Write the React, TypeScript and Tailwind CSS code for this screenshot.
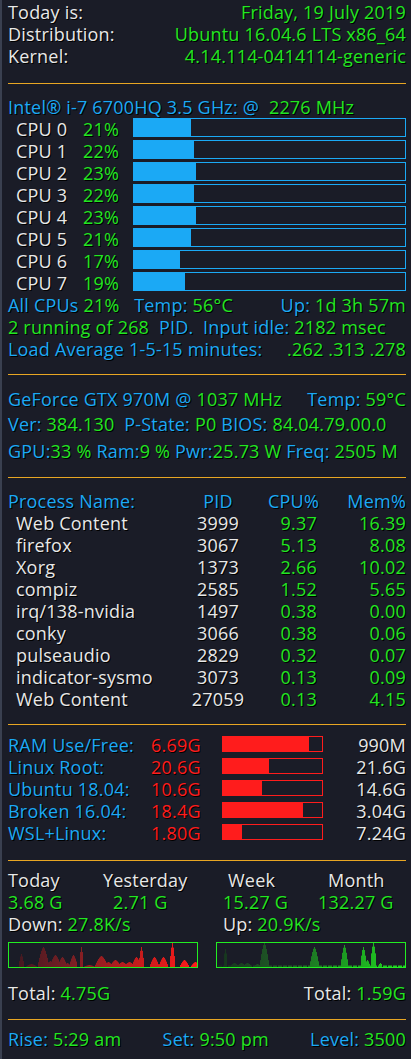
import type { ReactNode } from 'react'

const B = 'text-[#1ba9f5]'
const G = 'text-[#22e622]'
const W = 'text-[#e8e8e8]'
const R = 'text-[#ff1c1c]'

function Rule({ className = '' }: { className?: string }) {
  return <div className={`h-px bg-[#e8a623] ${className}`} />
}

function Row({ children, className = '' }: { children: ReactNode; className?: string }) {
  return <div className={`flex h-[22px] items-center whitespace-pre leading-[22px] ${className}`}>{children}</div>
}

const cpus = [21, 22, 23, 22, 23, 21, 17, 19]

const procs = [
  ['Web Content', '3999', '9.37', '16.39'],
  ['firefox', '3067', '5.13', '8.08'],
  ['Xorg', '1373', '2.66', '10.02'],
  ['compiz', '2585', '1.52', '5.65'],
  ['irq/138-nvidia', '1497', '0.38', '0.00'],
  ['conky', '3066', '0.38', '0.06'],
  ['pulseaudio', '2829', '0.32', '0.07'],
  ['indicator-sysmo', '3073', '0.13', '0.09'],
  ['Web Content', '27059', '0.13', '4.15'],
]

const disks = [
  ['RAM Use/Free:', '6.69G', 87, '990M'],
  ['Linux Root:', '20.6G', 46, '21.6G'],
  ['Ubuntu 18.04:', '10.6G', 39, '14.6G'],
  ['Broken 16.04:', '18.4G', 81, '3.04G'],
  ['WSL+Linux:', '1.80G', 19, '7.24G'],
] as const

// [x, height, half-width] of the spikes in each graph
const downPeaks = [
  [12, 13, 2], [22, 3, 5], [34, 20, 5], [41, 6, 3], [46, 12, 5], [53, 10, 4], [58, 4, 3], [64, 12, 3.5],
  [72, 20, 1.5], [80, 2, 5], [92, 11, 6], [99, 5, 4], [106, 7, 5], [113, 5, 5], [120, 5, 5],
  [127, 10, 4], [132, 20, 2], [145, 10, 4], [154, 10, 4], [163, 24, 2], [175, 7, 4], [186, 5, 4],
]
const upPeaks = [
  [8, 18, 1.5], [17, 4, 4], [24, 4, 4], [30, 4, 4], [40, 3, 3], [47, 24, 4], [97, 20, 4],
  [127, 22, 3], [146, 20, 2.5], [150, 7, 2], [156, 24, 2.5], [163, 4, 1.5],
]

function heights(width: number, peaks: number[][], base: number) {
  return Array.from({ length: width }, (_, x) => {
    let h = 0
    for (const [px, ph, pw] of peaks) {
      const d = Math.abs(x - px)
      if (d <= pw) h = Math.max(h, ph * (1 - (d / (pw + 1)) ** 1.5))
    }
    if (base && h < base && (x * 7) % 5 !== 0) h = base
    return h
  })
}

function Graph({ id, peaks, base, stops }: { id: string; peaks: number[][]; base: number; stops: string[] }) {
  const w = 188
  const hs = heights(w, peaks, base)
  return (
    <div className="h-[26px] flex-1 border border-[#22ee22]">
      <svg width={w} height={24} className="block">
        <defs>
          <linearGradient id={id} gradientUnits="userSpaceOnUse" x1="0" y1="0" x2={w} y2="0">
            {stops.map((c, i) => (
              <stop key={i} offset={i / (stops.length - 1)} stopColor={c} />
            ))}
          </linearGradient>
        </defs>
        {hs.map((h, x) =>
          h > 0 ? <rect key={x} x={x} y={24 - h} width={1} height={h} fill={`url(#${id})`} /> : null,
        )}
      </svg>
    </div>
  )
}

export default function App() {
  return (
    <div className="h-[1059px] w-[411px] overflow-hidden border-l-2 border-[#3a4050] bg-[#1a1c27] pl-[6px] pr-[5px] pt-[1px] font-['Open_Sans',sans-serif] text-[18px] font-medium tracking-[0.2px] [text-shadow:1px_1px_0_#000]">
      <Row className="justify-between">
        <span className={W}>Today is:</span>
        <span className={G}>Friday, 19 July 2019</span>
      </Row>
      <Row className="justify-between">
        <span className={W}>Distribution:</span>
        <span className={G}>Ubuntu 16.04.6 LTS x86_64</span>
      </Row>
      <Row className="justify-between">
        <span className={W}>Kernel:</span>
        <span className={G}>4.14.114-0414114-generic</span>
      </Row>

      <Rule className="mt-[16px]" />

      <Row className="mt-[12px]">
        <span className={B}>Intel® i-7 6700HQ 3.5 GHz: @  </span>
        <span className={G}>2276 MHz</span>
      </Row>
      {cpus.map((p, i) => (
        <div key={i} className="flex h-[22px] items-start">
          <span className={`w-[75px] pl-[8px] leading-[22px] ${W}`}>CPU {i}</span>
          <span className={`w-[50px] leading-[22px] ${G}`}>{p}%</span>
          <div className="h-[19px] flex-1 border border-[#1ba9f5]">
            <div className="h-full bg-[#1ba9f5]" style={{ width: `${p}%` }} />
          </div>
        </div>
      ))}
      <Row className="justify-between">
        <span>
          <span className={B}>All CPUs</span>
          <span className={G}> 21%   </span>
          <span className={B}>Temp: </span>
          <span className={G}>56°C</span>
        </span>
        <span>
          <span className={B}>Up: </span>
          <span className={G}>1d 3h 57m</span>
        </span>
      </Row>
      <Row>
        <span className={G}>2 running of 268  </span>
        <span className={B}>PID.  Input idle: </span>
        <span className={G}>2182 msec</span>
      </Row>
      <Row className="justify-between">
        <span className={B}>Load Average 1-5-15 minutes:</span>
        <span className={G}>.262 .313 .278</span>
      </Row>

      <Rule className="mt-[14px]" />

      <Row className="mt-[13px] justify-between">
        <span>
          <span className={B}>GeForce GTX 970M @ </span>
          <span className={G}>1037 MHz</span>
        </span>
        <span>
          <span className={B}>Temp: </span>
          <span className={G}>59°C</span>
        </span>
      </Row>
      <Row className="mt-[3px]">
        <span className={B}>Ver: </span>
        <span className={G}>384.130</span>
        <span className={B}>  P-State: </span>
        <span className={G}>P0</span>
        <span className={B}> BIOS: </span>
        <span className={G}>84.04.79.00.0</span>
      </Row>
      <Row className="mt-[5px]">
        <span className={B}>GPU:</span>
        <span className={G}>33 %</span>
        <span className={B}> Ram:</span>
        <span className={G}>9 %</span>
        <span className={B}> Pwr:</span>
        <span className={G}>25.73 W</span>
        <span className={B}> Freq: </span>
        <span className={G}>2505 M</span>
      </Row>

      <Rule className="mt-[15px]" />

      <Row className={`mt-[12px] ${B}`}>
        <span className="w-[180px]">Process Name:</span>
        <span className="w-[60px] text-center">PID</span>
        <span className="w-[71px] text-right">CPU%</span>
        <span className="flex-1 text-right">Mem%</span>
      </Row>
      {procs.map(([name, pid, cpu, mem], i) => (
        <Row key={i}>
          <span className={`w-[180px] pl-[8px] ${W}`}>{name}</span>
          <span className={`w-[60px] text-center ${W}`}>{pid}</span>
          <span className={`w-[69px] text-right ${G}`}>{cpu}</span>
          <span className={`flex-1 text-right ${G}`}>{mem}</span>
        </Row>
      ))}

      <Rule className="mt-[14px]" />

      <div className="mt-[9px]">
        {disks.map(([label, used, pct, free]) => (
          <div key={label} className="flex h-[22px] items-start leading-[22px]">
            <span className={`w-[143px] ${B}`}>{label}</span>
            <span className={`w-[71px] ${R}`}>{used}</span>
            <div className="mt-[2px] h-[16px] w-[101px] border border-[#ff1c1c]">
              <div className="h-full bg-[#ff1c1c]" style={{ width: `${pct}%` }} />
            </div>
            <span className={`flex-1 text-right ${W}`}>{free}</span>
          </div>
        ))}
      </div>

      <Rule className="mt-[16px]" />

      <Row className={`mt-[8px] ${W}`}>
        <span className="w-[95px]">Today</span>
        <span className="w-[125px]">Yesterday</span>
        <span className="w-[100px]">Week</span>
        <span>Month</span>
      </Row>
      <Row className={G}>
        <span className="w-[105px]">3.68 G</span>
        <span className="w-[110px]">2.71 G</span>
        <span className="w-[95px]">15.27 G</span>
        <span>132.27 G</span>
      </Row>
      <Row>
        <span className="w-[215px]">
          <span className={W}>Down: </span>
          <span className={G}>27.8K/s</span>
        </span>
        <span>
          <span className={W}>Up: </span>
          <span className={G}>20.9K/s</span>
        </span>
      </Row>
      <div className="mt-[7px] flex gap-[18px]">
        <Graph id="down" peaks={downPeaks} base={0} stops={['#3c1820', '#7a1f24', '#c01c1c', '#ff1a1a']} />
        <Graph id="up" peaks={upPeaks} base={1.5} stops={['#16321e', '#1f5a26', '#1c9a22', '#22d822']} />
      </div>
      <Row className="mt-[14px] justify-between">
        <span>
          <span className={W}>Total: </span>
          <span className={G}>4.75G</span>
        </span>
        <span>
          <span className={W}>Total: </span>
          <span className={G}>1.59G</span>
        </span>
      </Row>

      <Rule className="mt-[15px]" />

      <Row className="mt-[8px] justify-between">
        <span>
          <span className={B}>Rise: </span>
          <span className={G}>5:29 am</span>
        </span>
        <span>
          <span className={B}>Set: </span>
          <span className={G}>9:50 pm</span>
        </span>
        <span>
          <span className={B}>Level: </span>
          <span className={G}>3500</span>
        </span>
      </Row>
    </div>
  )
}
